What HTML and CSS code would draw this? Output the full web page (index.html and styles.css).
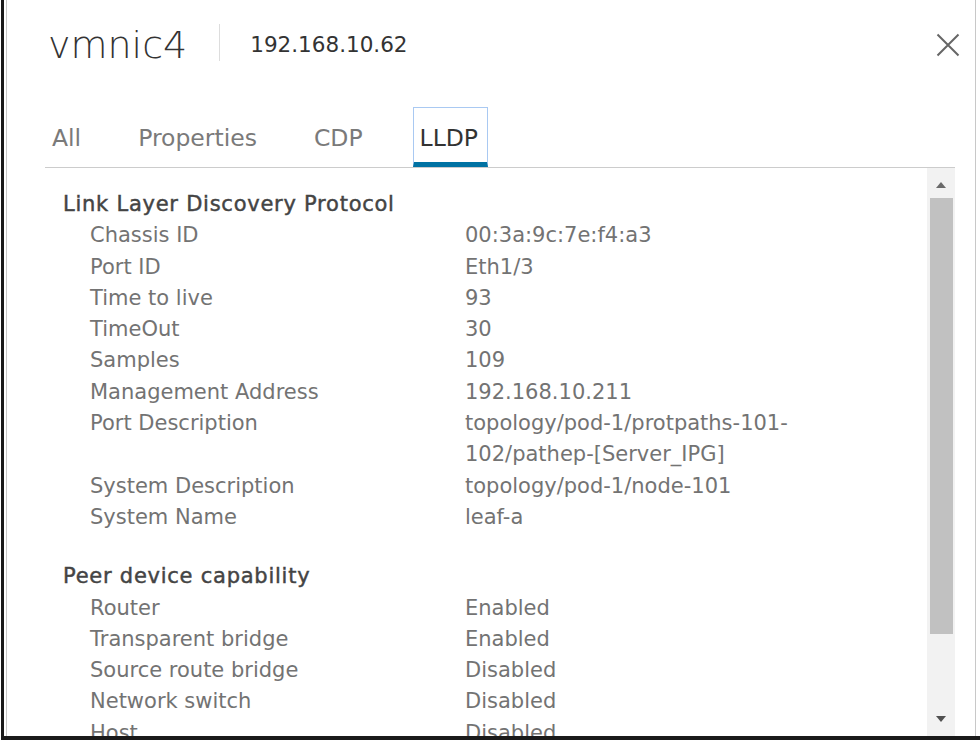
FILE: index.html
```html
<html lang="en">
<head>
    <meta charset="UTF-8">
    <meta name="viewport" content="width=device-width, initial-scale=1.0">
    <title>vmnic4</title>
    <link rel="stylesheet" href="styles.css">
</head>
<body>

    <div class="frame">
        <div class="modal">
            <div class="modal-header">
                <h1 class="title">vmnic4</h1>
                <span class="divider"></span>
                <span class="host">192.168.10.62</span>
                <button class="close" aria-label="Close">
                    <svg width="24" height="24" viewBox="0 0 24 24">
                        <path d="M1.5 1.5 L22.5 22.5 M22.5 1.5 L1.5 22.5" stroke="#666" stroke-width="2" fill="none"/>
                    </svg>
                </button>
            </div>

            <ul class="tabs">
                <li class="tab">All</li>
                <li class="tab">Properties</li>
                <li class="tab">CDP</li>
                <li class="tab active">LLDP</li>
            </ul>

            <div class="panel">
                <div class="details">
                    <div class="section">
                        <div class="section-title">Link Layer Discovery Protocol</div>
                        <dl class="props">
                            <dt>Chassis ID</dt><dd>00:3a:9c:7e:f4:a3</dd>
                            <dt>Port ID</dt><dd>Eth1/3</dd>
                            <dt>Time to live</dt><dd>93</dd>
                            <dt>TimeOut</dt><dd>30</dd>
                            <dt>Samples</dt><dd>109</dd>
                            <dt>Management Address</dt><dd>192.168.10.211</dd>
                            <dt>Port Description</dt><dd>topology/pod-1/protpaths-101-<br>102/pathep-[Server_IPG]</dd>
                            <dt>System Description</dt><dd>topology/pod-1/node-101</dd>
                            <dt>System Name</dt><dd>leaf-a</dd>
                        </dl>
                    </div>
                    <div class="section">
                        <div class="section-title">Peer device capability</div>
                        <dl class="props">
                            <dt>Router</dt><dd>Enabled</dd>
                            <dt>Transparent bridge</dt><dd>Enabled</dd>
                            <dt>Source route bridge</dt><dd>Disabled</dd>
                            <dt>Network switch</dt><dd>Disabled</dd>
                            <dt>Host</dt><dd>Disabled</dd>
                        </dl>
                    </div>
                </div>
                <div class="scrollbar">
                    <span class="arrow up"></span>
                    <span class="thumb"></span>
                    <span class="arrow down"></span>
                </div>
            </div>
        </div>
    </div>

</body>
</html>
```

FILE: styles.css
```css
body {
    margin: 0;
    background: #fff;
    font-family: "DejaVu Sans", sans-serif;
}
.frame {
    margin-left: 1px;
    height: 736px;
    border-left: 3px solid #1a1a1a;
    border-bottom: 4px solid #1a1a1a;
}
.modal {
    height: 736px;
    margin: 0 4px 0 2px;
    padding: 0 20px 0 39px;
    border-left: 1px solid #c8c8c8;
    border-right: 1px solid #c8c8c8;
    display: flex;
    flex-direction: column;
}
.modal-header {
    display: flex;
    align-items: center;
    height: 40px;
    padding-top: 25px;
}
.title {
    margin: 0;
    padding-left: 2px;
    font-size: 38px;
    line-height: 40px;
    font-weight: 300;
    color: #333;
}
.divider {
    width: 1px;
    height: 37px;
    margin: -6px 30px 0 32px;
    background: #ddd;
}
.host {
    font-size: 21.5px;
    line-height: 24px;
    color: #333;
}
.close {
    margin: 0 -5px 0 auto;
    padding: 0;
    border: none;
    background: none;
    display: flex;
}
.tabs {
    list-style: none;
    margin: 42px 0 0 -1px;
    padding: 0;
    display: flex;
    gap: 43px;
    border-bottom: 1px solid #ccc;
}
.tab {
    box-sizing: border-box;
    height: 60px;
    padding: 17px 7px 0;
    font-size: 23.5px;
    line-height: 28px;
    color: #7a7a7a;
}
.tab.active {
    color: #333;
    border: 1px solid #a9c9f2;
    border-bottom: 5px solid #0072a3;
    padding: 16px 9px 0 6px;
}
.panel {
    flex: 1;
    display: flex;
    min-height: 0;
}
.details {
    flex: 1;
    overflow: hidden;
    padding: 21px 0 0 17px;
}
.section + .section {
    margin-top: 28px;
}
.section-title {
    font-size: 21px;
    line-height: 31.3px;
    letter-spacing: 0.75px;
    color: #444;
    -webkit-text-stroke: 0.45px #444;
}
.props {
    margin: 0;
    display: grid;
    grid-template-columns: 402px 1fr;
    font-size: 21px;
    line-height: 31.3px;
    color: #737373;
}
.props dt {
    padding-left: 27px;
}
.props dd {
    margin: 0;
}
.scrollbar {
    width: 28px;
    background: #f2f2f2;
    display: flex;
    flex-direction: column;
    align-items: center;
}
.arrow {
    width: 0;
    height: 0;
    border-left: 5px solid transparent;
    border-right: 5px solid transparent;
}
.arrow.up {
    margin: 14px 0 10px;
    border-bottom: 6px solid #6a6a6a;
}
.arrow.down {
    margin: auto 0 14px;
    border-top: 6px solid #505050;
}
.thumb {
    width: 23px;
    height: 436px;
    background: #c1c1c1;
}
```
